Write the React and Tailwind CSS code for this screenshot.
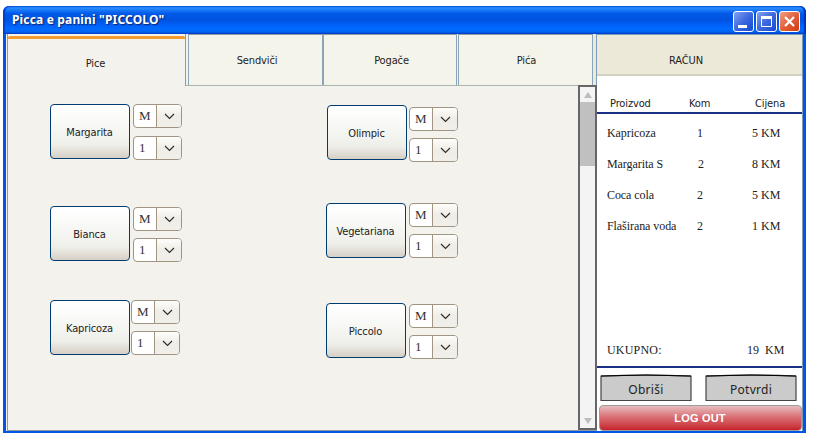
import React from "react";

const UI = "font-['DejaVu_Sans_Condensed','DejaVu_Sans',sans-serif] text-[11px] leading-[14px] tracking-[-0.13px] text-[#222]";
const SERIF = "font-['Liberation_Serif',serif] text-[12px] leading-[14px] text-[#222]";

function Select({ value, className }) {
  return (
    <div className={`flex h-6 w-[49px] overflow-hidden rounded-[4px] border border-[#a09482] bg-white ${className}`}>
      <div className="w-[22px] pl-[5px] font-['Liberation_Serif',serif] text-[13px] leading-[21px] text-[#333]">{value}</div>
      <div className="flex flex-1 items-center justify-center border-l border-[#a09482] bg-linear-to-b from-[#fdfdfb] via-[#efede6] to-[#f1efe9]">
        <svg width="11" height="7" viewBox="0 0 11 7" className="mt-px">
          <path d="M1 1 L5.5 5.5 L10 1" fill="none" stroke="#2b2b2b" strokeWidth="1.1" />
        </svg>
      </div>
    </div>
  );
}

function Item({ name, className, gap, top, between }) {
  return (
    <div className={`flex h-[55px] ${className}`}>
      <button className={`h-[55px] w-20 shrink-0 rounded-[4px] border border-[#003c74] bg-linear-to-b from-white from-5% via-[#efefea] via-75% to-[#d6d0c5] pt-[2px] pr-px ${UI}`}>
        {name}
      </button>
      <div className={gap}>
        <Select value="M" className={top} />
        <Select value="1" className={between} />
      </div>
    </div>
  );
}

function Tab({ label, className }) {
  return (
    <div className={`flex h-[52px] items-center justify-center border-t border-b border-t-[#919b9c] border-b-[#a9b5b2] bg-[#f4f4ea] pt-[2px] ${UI} ${className}`}>
      {label}
    </div>
  );
}

function Row({ name, qty, price, className, qtyClass = "" }) {
  return (
    <div className={`flex h-[14px] pl-[10px] ${SERIF} ${className}`}>
      <span className="w-[90px] tracking-[-0.07px] whitespace-nowrap">{name}</span>
      <span className={`w-[55px] ${qtyClass}`}>{qty}</span>
      <span className="whitespace-nowrap">{price}</span>
    </div>
  );
}

function SketchButton({ label }) {
  return (
    <button className="relative h-7 w-[92px] font-['Noto_Sans',sans-serif] text-[12px] tracking-[0.3px] text-[#222]">
      <svg width="92" height="28" viewBox="0 0 92 28" className="absolute inset-0">
        <path d="M1 2.2 Q46 0 91 2.2 V26.5 H1 Z" fill="#cbcbcb" stroke="#444" strokeWidth="1.2" />
        <path d="M1 2 Q46 0 91 2" fill="none" stroke="#000" strokeWidth="1" />
      </svg>
      <span className="relative top-[2px]">{label}</span>
    </button>
  );
}

function TitleBar() {
  return (
    <div className="flex h-7 items-center rounded-t-[6px] bg-[linear-gradient(180deg,#0058e0_0%,#2a8fff_7%,#1a7af8_14%,#0058e6_28%,#0053e0_50%,#0060f8_68%,#006cff_84%,#0062f0_92%,#0040c8_100%)] pr-[6px] pl-[9px] shadow-[inset_-2px_0_1px_#0030b8,inset_2px_0_1px_#0040d0]">
      <span className="flex-1 font-['Noto_Sans',sans-serif] text-[12px] font-bold tracking-[0.16px] text-white [text-shadow:1px_1px_1px_#0a246a]">
        Picca e panini "PICCOLO"
      </span>
      <div className="flex gap-[2px] pt-[2px]">
        <svg width="21" height="21" viewBox="0 0 21 21">
          <rect x=".5" y=".5" width="20" height="20" rx="2.5" fill="url(#blue)" stroke="#fff" />
          <rect x="5" y="14" width="9" height="3" fill="#fff" />
        </svg>
        <svg width="21" height="21" viewBox="0 0 21 21">
          <rect x=".5" y=".5" width="20" height="20" rx="2.5" fill="url(#blue)" stroke="#fff" />
          <path d="M5 6.5H16" stroke="#fff" strokeWidth="3" />
          <path d="M5.5 6V15.5H15.5V6" fill="none" stroke="#fff" />
        </svg>
        <svg width="21" height="21" viewBox="0 0 21 21">
          <defs>
            <linearGradient id="blue" x1="0" y1="0" x2="1" y2="1">
              <stop offset="0" stopColor="#86a5f5" />
              <stop offset=".5" stopColor="#3d68df" />
              <stop offset="1" stopColor="#1448d4" />
            </linearGradient>
            <linearGradient id="red" x1="0" y1="0" x2="1" y2="1">
              <stop offset="0" stopColor="#f0a48c" />
              <stop offset=".5" stopColor="#e2603c" />
              <stop offset="1" stopColor="#d03a08" />
            </linearGradient>
          </defs>
          <rect x=".5" y=".5" width="20" height="20" rx="2.5" fill="url(#red)" stroke="#fff" />
          <path d="M6 6L15 15M15 6L6 15" stroke="#fff" strokeWidth="2.2" />
        </svg>
      </div>
    </div>
  );
}

function Scrollbar() {
  return (
    <div className="flex w-[19px] flex-col border-2 border-[#666] bg-[#f4f4f4]">
      <div className="flex h-[15px] items-center justify-center">
        <svg width="8" height="6" viewBox="0 0 8 6"><path d="M0 6L4 0L8 6Z" fill="#bdbdbd" /></svg>
      </div>
      <div className="h-16 bg-[#c0c0c0]" />
      <div className="flex-1" />
      <div className="flex h-[14px] items-center justify-center">
        <svg width="8" height="6" viewBox="0 0 8 6"><path d="M0 0L4 6L8 0Z" fill="#bdbdbd" /></svg>
      </div>
    </div>
  );
}

function Receipt() {
  return (
    <div className="flex w-[206px] flex-col border-r border-[#7a9cb8] bg-white">
      <div className={`h-[42px] border-t border-b-2 border-t-[#7a9cb8] border-b-[#d5d1c2] bg-[#ece9d8] pt-[19px] pl-[72px] ${UI}`}>RAČUN</div>
      <div className={`mt-[21px] flex h-[14px] pl-[13px] ${UI}`}>
        <span className="w-[79px]">Proizvod</span>
        <span className="w-[66px]">Kom</span>
        <span>Cijena</span>
      </div>
      <div className="mt-px h-[2px] bg-[#1c2f87]" />
      <Row name="Kapricoza" qty="1" price="5 KM" className="mt-[12px]" />
      <Row name="Margarita S" qty="2" price="8 KM" className="mt-[17px]" qtyClass="pl-px" />
      <Row name="Coca cola" qty="2" price="5 KM" className="mt-[17px]" />
      <Row name="Flaširana voda" qty="2" price="1 KM" className="mt-[17px]" />
      <div className={`mt-[110px] flex h-[14px] pl-[10px] ${SERIF}`}>
        <span className="w-[140px] tracking-[0.2px]">UKUPNO:</span>
        <span className="whitespace-pre">19  KM</span>
      </div>
      <div className="mt-[9px] h-[2px] bg-[#1c2f87]" />
      <div className="mt-[6px] flex gap-[13px] pl-[3px]">
        <SketchButton label="Obriši" />
        <SketchButton label="Potvrdi" />
      </div>
      <button className="mt-[3px] ml-[2px] h-[26px] w-[203px] rounded-[4px] border border-[#9c9c9c] bg-linear-to-b from-[#e6bcbf] via-[#d7686f] to-[#c5202b] pr-px font-['Liberation_Sans',sans-serif] text-[11px] font-bold tracking-[0.2px] text-white">
        LOG OUT
      </button>
    </div>
  );
}

export default function App() {
  return (
    <div className="h-[447px] w-[817px] overflow-hidden bg-white pt-[6px] pl-[3px]">
      <div className="w-[803px]">
        <TitleBar />
        <div className="flex h-[399px] border-x-[3px] border-b-2 border-[#0054e6] bg-[#ece9d8]">
          <div className="flex w-[591px] flex-col bg-[#f3f2ec]">
            <div className="flex h-[51px]">
              <div className={`z-10 ml-px flex h-[52px] w-[179px] justify-center border-r border-l border-[#919b9c] bg-[#f3f2ec] ${UI}`}>
                <div className="mt-[2px] h-[50px] w-full rounded-t-[2px] border-t-[3px] border-[#f39b2c] pt-[18px] pr-[2px] text-center">Pice</div>
              </div>
              <Tab label="Sendviči" className="ml-[2px] w-[135px] border-x border-x-[#8ba5b8] pl-[3px]" />
              <Tab label="Pogače" className="w-[134px] border-x border-x-[#8ba5b8] pl-[3px]" />
              <Tab label="Pića" className="ml-px w-[135px] border-x border-x-[#8ba5b8] pl-[2px]" />
              <div className="flex-1 border-r border-[#7a9cb8] bg-[#ece9d8]" />
            </div>
            <div className="ml-px flex flex-1 border-b border-l border-[#919b9c]">
              <div className="flex flex-1 border-t border-[#a9b5b2]">
                <div className="w-[276px] pt-[18px] pl-[42px]">
                  <Item name="Margarita" className="" gap="ml-[3px]" top="" between="mt-2" />
                  <Item name="Bianca" className="mt-[47px]" gap="ml-[3px] pt-px" top="" between="mt-[7px]" />
                  <Item name="Kapricoza" className="mt-[39px]" gap="ml-px" top="" between="mt-[7px]" />
                </div>
                <div className="pt-[19px] pl-[42px]">
                  <Item name="Olimpic" className="ml-px" gap="ml-[2px] pt-[2px]" top="" between="mt-[7px]" />
                  <Item name="Vegetariana" className="mt-[43px]" gap="ml-[3px]" top="" between="mt-[7px]" />
                  <Item name="Piccolo" className="mt-[45px]" gap="ml-[3px] pt-px" top="" between="mt-[7px]" />
                </div>
              </div>
              <Scrollbar />
            </div>
          </div>
          <Receipt />
        </div>
      </div>
    </div>
  );
}
